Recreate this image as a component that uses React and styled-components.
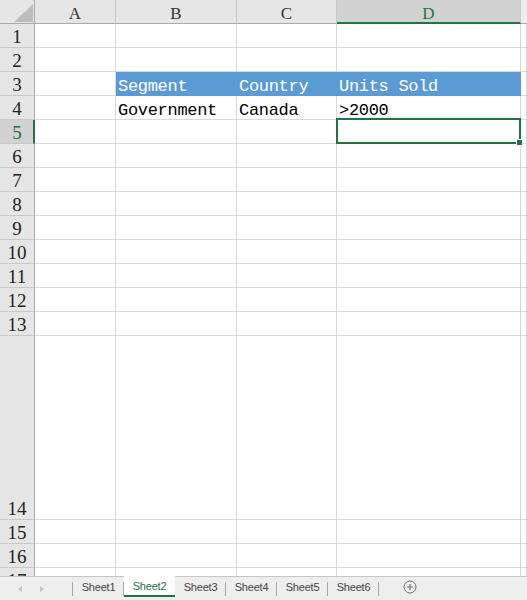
import React from "react";
import styled, { createGlobalStyle, css } from "styled-components";

const GREEN = "#217346";
const GRID = "#D9D9D9";
const HEAD_BG = "#E6E6E6";
const HEAD_SEL = "#D2D2D2";
const HEAD_LINE = "#ABABAB";
const HEAD_SEP = "#C8C8C8";
const BAND = "#5B9BD5";

const GlobalStyle = createGlobalStyle`
  html, body {
    margin: 0;
    padding: 0;
    background: #fff;
    overflow: hidden;
  }
  * {
    box-sizing: border-box;
  }
`;

const Window = styled.div`
  width: 527px;
  height: 600px;
  display: flex;
  flex-direction: column;
  background: #fff;
`;

const Sheet = styled.div`
  height: 576px;
  overflow: hidden;
  display: grid;
  grid-template-columns: 35px 81px 121px 100px 184px 1fr;
  grid-template-rows: 24px repeat(13, 24px) 184px 24px 24px 24px;
`;

const Corner = styled.div`
  position: relative;
  background: ${HEAD_BG};
  border-right: 1px solid ${HEAD_LINE};
  border-bottom: 1px solid ${HEAD_LINE};

  &::after {
    content: "";
    position: absolute;
    right: 1px;
    bottom: 1px;
    width: 0;
    height: 0;
    border-left: 19px solid transparent;
    border-bottom: 18px solid #BDBDBD;
  }
`;

const ColHeader = styled.div`
  display: flex;
  align-items: flex-end;
  justify-content: center;
  padding-bottom: 1px;
  background: ${HEAD_BG};
  border-right: 1px solid ${HEAD_SEP};
  border-bottom: 1px solid ${HEAD_LINE};
  font-family: "Liberation Serif", serif;
  font-size: 17px;
  line-height: 17px;
  color: #333;

  ${({ selected }) =>
    selected &&
    css`
      background: ${HEAD_SEL};
      color: ${GREEN};
      border-bottom: 2px solid ${GREEN};
      padding-bottom: 0;
    `}

  ${({ filler }) =>
    filler &&
    css`
      background: #EDEDED;
      border-right: none;
    `}
`;

const RowHeader = styled.div`
  display: flex;
  align-items: flex-end;
  justify-content: center;
  padding-bottom: 1px;
  background: ${HEAD_BG};
  border-right: 1px solid ${HEAD_LINE};
  border-bottom: 1px solid ${HEAD_SEP};
  font-family: "Liberation Serif", serif;
  font-size: 19px;
  line-height: 19px;
  color: #222;

  ${({ selected }) =>
    selected &&
    css`
      background: ${HEAD_SEL};
      color: ${GREEN};
      border-right: 2px solid ${GREEN};
      padding-left: 1px;
    `}
`;

const Cell = styled.div`
  position: relative;
  display: flex;
  align-items: flex-end;
  padding: 0 0 0 2px;
  border-right: 1px solid ${GRID};
  border-bottom: 1px solid ${GRID};
  font-family: "Liberation Mono", monospace;
  font-size: 17px;
  line-height: 17px;
  letter-spacing: -0.3px;
  color: #000;
  white-space: nowrap;

  ${({ band }) =>
    band &&
    css`
      background: ${BAND};
      color: #fff;
      border-right-color: ${BAND};
      border-bottom-color: ${BAND};
    `}

  ${({ active }) =>
    active &&
    css`
      z-index: 2;
      &::before {
        content: "";
        position: absolute;
        left: -1px;
        top: -2px;
        right: -1px;
        bottom: -1px;
        border: 2px solid ${GREEN};
      }
      &::after {
        content: "";
        position: absolute;
        right: -3px;
        bottom: -3px;
        width: 5px;
        height: 5px;
        background: ${GREEN};
        border: 1px solid #fff;
      }
    `}
`;

const TabBar = styled.div`
  flex: 1;
  display: flex;
  align-items: stretch;
  background: #EEEEEE;
  border-top: 1px solid #C6C6C6;
  padding-bottom: 3px;
  font-family: "Liberation Sans", Arial, sans-serif;
`;

const NavArrows = styled.div`
  width: 73px;
  display: flex;
  align-items: center;
  gap: 18px;
  padding-left: 18px;
  border-right: 1px solid #A8A8A8;
  margin: 5px 0 1px;
`;

const Arrow = styled.span`
  width: 0;
  height: 0;
  border-top: 3.5px solid transparent;
  border-bottom: 3.5px solid transparent;
  ${({ dir }) =>
    dir === "left"
      ? css`border-right: 4px solid #C4C4C4;`
      : css`border-left: 4px solid #C4C4C4;`}
`;

const Tab = styled.div`
  position: relative;
  width: 51px;
  display: flex;
  align-items: center;
  justify-content: center;
  font-size: 11px;
  letter-spacing: -0.2px;
  color: #444;

  &::after {
    content: "";
    position: absolute;
    right: 0;
    top: 5px;
    bottom: 1px;
    width: 1px;
    background: #A8A8A8;
  }

  ${({ active }) =>
    active &&
    css`
      background: #fff;
      color: ${GREEN};
      border-bottom: 2px solid ${GREEN};
      margin-top: -1px;
      &::after {
        display: none;
      }
    `}
`;

const AddSheet = styled.div`
  display: flex;
  align-items: center;
  padding-left: 24px;
`;

const columns = ["A", "B", "C", "D"];

const rowNumbers = Array.from({ length: 17 }, (_, i) => i + 1);

const data = {
  3: { B: "Segment", C: "Country", D: "Units Sold" },
  4: { B: "Government", C: "Canada", D: ">2000" },
};

const bandRow = 3;
const active = { row: 5, col: "D" };

const sheets = ["Sheet1", "Sheet2", "Sheet3", "Sheet4", "Sheet5", "Sheet6"];

const App = () => {
  return (
    <>
      <GlobalStyle />
      <Window>
        <Sheet>
          <Corner />
          {columns.map((c) => (
            <ColHeader key={c} selected={c === active.col}>
              {c}
            </ColHeader>
          ))}
          <ColHeader filler />

          {rowNumbers.map((r) => (
            <React.Fragment key={r}>
              <RowHeader selected={r === active.row}>{r}</RowHeader>
              {columns.map((c) => {
                const isBand = r === bandRow && c !== "A";
                const isActive = r === active.row && c === active.col;
                return (
                  <Cell key={c} band={isBand} active={isActive}>
                    {data[r] && data[r][c]}
                  </Cell>
                );
              })}
              <Cell />
            </React.Fragment>
          ))}
        </Sheet>

        <TabBar>
          <NavArrows>
            <Arrow dir="left" />
            <Arrow dir="right" />
          </NavArrows>
          {sheets.map((s) => (
            <Tab key={s} active={s === "Sheet2"}>
              {s}
            </Tab>
          ))}
          <AddSheet>
            <svg width="14" height="14" viewBox="0 0 14 14">
              <circle cx="7" cy="7" r="6" fill="none" stroke="#6E6E6E" strokeWidth="1" />
              <path d="M7 4v6M4 7h6" stroke="#6E6E6E" strokeWidth="1.2" />
            </svg>
          </AddSheet>
        </TabBar>
      </Window>
    </>
  );
};

export default App;
